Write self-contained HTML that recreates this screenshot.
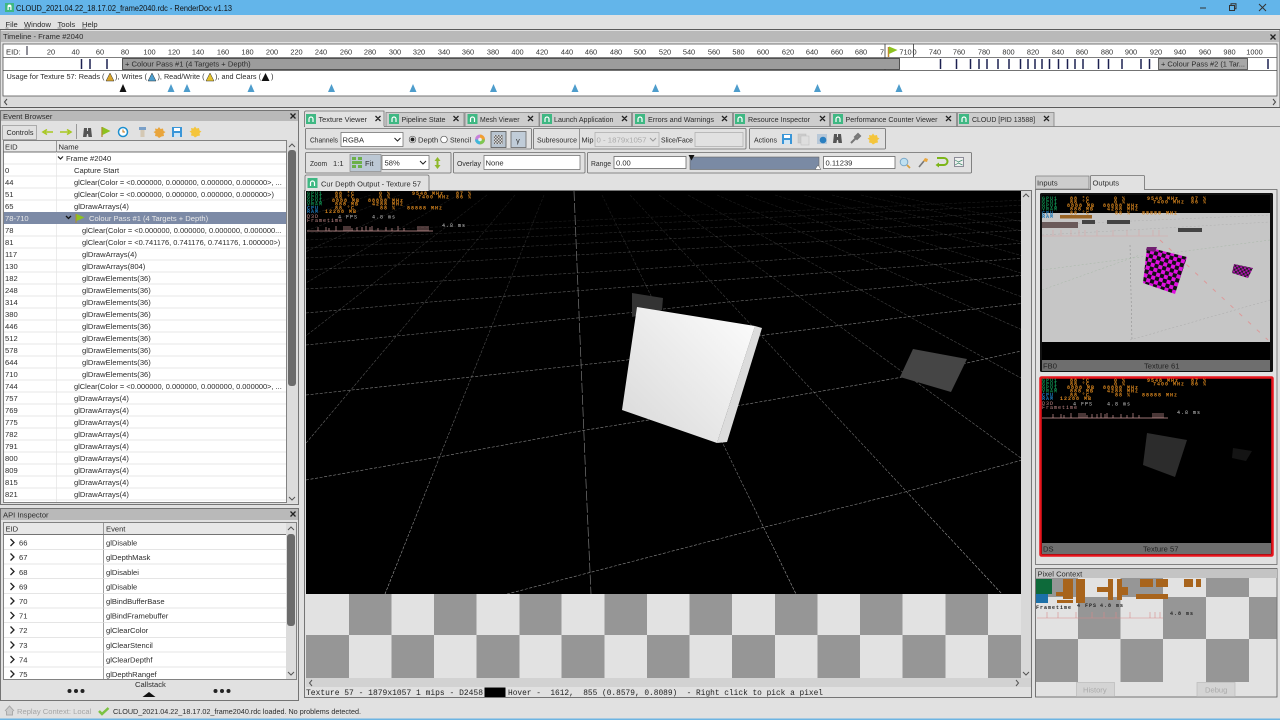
<!DOCTYPE html>
<html><head><meta charset="utf-8"><title>RenderDoc</title>
<style>
html,body{margin:0;padding:0;background:#e1e1e1;width:1280px;height:720px;overflow:hidden}
svg{display:block;position:absolute;left:0;top:0;filter:blur(.35px)}
text{font-family:"Liberation Sans",sans-serif;font-size:7.6px;fill:#2c2c2c;white-space:pre}
text.n{font-size:7.45px}
.m text,text.m{font-family:"Liberation Mono",monospace;font-size:8px;fill:#222}
.t text{text-anchor:middle;font-size:7.4px;fill:#333}
.o text{font-family:"Liberation Mono",monospace;font-size:5px;font-weight:bold;letter-spacing:1px;fill:#d8861e}
.o .g{fill:#0f8a4e}.o .b{fill:#1c78b8}.o .w{fill:#ccc;font-weight:normal}.o .p{fill:#c48a8a;font-weight:normal}
.c text{font-family:"Liberation Mono",monospace;font-size:5px;font-weight:bold;letter-spacing:1px;fill:#3a2208}
.c .w{fill:#222}
.x{stroke:#222;stroke-width:1.3;fill:none}
.tab{fill:#cdcdcd;stroke:#808080;stroke-width:.8}
.hz{stroke:#8a8a8a;stroke-width:.6;stroke-dasharray:3 1.6;fill:none}
.vt{stroke:url(#vg);stroke-width:.6;stroke-dasharray:3 1.4;fill:none}
</style></head><body>
<svg width="1280" height="720" viewBox="0 0 1280 720" xmlns="http://www.w3.org/2000/svg">
<defs>
<clipPath id="vp"><rect x="306" y="191" width="715" height="403"/></clipPath>
<linearGradient id="vg" gradientUnits="userSpaceOnUse" x1="0" y1="195" x2="0" y2="594"><stop offset="0" stop-color="#181818"/><stop offset=".4" stop-color="#505050"/><stop offset="1" stop-color="#a5a5a5"/></linearGradient>
<linearGradient id="cube" x1="0" y1="1" x2="1" y2="0"><stop offset="0" stop-color="#d8d8d8"/><stop offset="1" stop-color="#fdfdfd"/></linearGradient>
<pattern id="chk" width="8" height="8" patternUnits="userSpaceOnUse" patternTransform="rotate(16) translate(1143 247)"><rect width="8" height="8" fill="#e010e0"/><rect width="4" height="4" fill="#111"/><rect x="4" y="4" width="4" height="4" fill="#111"/></pattern>
<pattern id="chk2" width="4" height="4" patternUnits="userSpaceOnUse" patternTransform="rotate(14)"><rect width="4" height="4" fill="#b010b0"/><rect width="2" height="2" fill="#222"/><rect x="2" y="2" width="2" height="2" fill="#222"/></pattern>
<pattern id="mini" width="3" height="3" patternUnits="userSpaceOnUse"><rect width="3" height="3" fill="#dadada"/><rect width="1.5" height="1.5" fill="#666"/><rect x="1.5" y="1.5" width="1.5" height="1.5" fill="#666"/></pattern>
</defs>

<!-- title bar -->
<rect width="1280" height="15" fill="#63b5ea"/>
<rect x="5" y="3" width="9" height="9" fill="#3fb883"/><path d="M7.5 10V6.5a2 2 0 0 1 4 0V10h-1.2V7h-1.6v3z" fill="#fff"/>
<text x="16" y="11" style="font-size:8.6px;fill:#111" textLength="216" lengthAdjust="spacingAndGlyphs">CLOUD_2021.04.22_18.17.02_frame2040.rdc - RenderDoc v1.13</text>
<path d="M1200 8h6" stroke="#333" stroke-width="1"/>
<path d="M1229.5 5.5h5v5h-5zM1231 5.5V3.8h5v5h-1.5" fill="none" stroke="#333" stroke-width="1"/>
<path d="M1259 4l7 7M1266 4l-7 7" stroke="#333" stroke-width="1"/>

<!-- menu -->
<text x="5.5" y="27">File</text>
<text x="24" y="27">Window</text><text x="57.5" y="27">Tools</text><text x="82" y="27">Help</text>
<path d="M5.5 28h3M24 28h6M57.5 28h4M82 28h4" stroke="#333" stroke-width=".5"/>

<!-- timeline -->
<rect x="0" y="29.5" width="1280" height="78" fill="none" stroke="#5a5a5a" stroke-width="1"/>
<rect x="1" y="31" width="1278" height="11" fill="#b9b9b9"/>
<text x="3" y="39">Timeline - Frame #2040</text>
<path d="M1270.5 34.5l5 5M1275.5 34.5l-5 5" class="x"/>
<rect x="3" y="44" width="1274" height="52" fill="#fff" stroke="#555" stroke-width=".8"/>
<line x1="3" x2="1277" y1="57.5" y2="57.5" stroke="#555" stroke-width=".8"/>
<line x1="3" x2="1277" y1="70.5" y2="70.5" stroke="#444" stroke-width=".8"/>
<text x="6" y="54.5">EID:</text>
<line x1="27" x2="27" y1="46" y2="55" stroke="#223" stroke-width="1"/>
<g class="t">
<text x="51" y="54.5">20</text><text x="75.6" y="54.5">40</text><text x="100" y="54.5">60</text><text x="125" y="54.5">80</text><text x="149.5" y="54.5">100</text><text x="174" y="54.5">120</text><text x="198" y="54.5">140</text><text x="223" y="54.5">160</text><text x="247.5" y="54.5">180</text><text x="272" y="54.5">200</text><text x="296.5" y="54.5">220</text><text x="321" y="54.5">240</text><text x="346" y="54.5">260</text><text x="370" y="54.5">280</text><text x="395" y="54.5">300</text><text x="419" y="54.5">320</text><text x="444" y="54.5">340</text><text x="468" y="54.5">360</text><text x="493" y="54.5">380</text><text x="517.5" y="54.5">400</text><text x="542" y="54.5">420</text><text x="567" y="54.5">440</text><text x="591" y="54.5">460</text><text x="616" y="54.5">480</text><text x="640" y="54.5">500</text><text x="665" y="54.5">520</text><text x="689" y="54.5">540</text><text x="714" y="54.5">560</text><text x="738.5" y="54.5">580</text><text x="763" y="54.5">600</text><text x="788" y="54.5">620</text><text x="812" y="54.5">640</text><text x="837" y="54.5">660</text><text x="861" y="54.5">680</text><text x="882" y="54.5">7</text><text x="905.5" y="54.5">710</text><text x="914.5" y="54.5">0</text><text x="935" y="54.5">740</text><text x="959" y="54.5">760</text><text x="984" y="54.5">780</text><text x="1008.5" y="54.5">800</text><text x="1033" y="54.5">820</text><text x="1058" y="54.5">840</text><text x="1082" y="54.5">860</text><text x="1107" y="54.5">880</text><text x="1131" y="54.5">900</text><text x="1156" y="54.5">920</text><text x="1180" y="54.5">940</text><text x="1205" y="54.5">960</text><text x="1229.5" y="54.5">980</text><text x="1254.5" y="54.5">1000</text>
</g>
<path d="M885 44V70M913.5 44V57" stroke="#333" stroke-width=".8"/>
<path d="M888.5 57V47" stroke="#c08a30" stroke-width="1.5"/><path d="M889 46.5l8.5 3.5-8.5 4z" fill="#8dc21f"/>
<rect x="122.5" y="58.5" width="777" height="11" fill="#9c9c9c" stroke="#333" stroke-width=".8"/>
<text x="125" y="66.5">+ Colour Pass #1 (4 Targets + Depth)</text>
<rect x="1158.5" y="58.5" width="89" height="11" fill="#a8a8a8" stroke="#444" stroke-width=".8"/>
<text x="1161" y="66.5" textLength="84" lengthAdjust="spacingAndGlyphs">+ Colour Pass #2 (1 Tar...</text>
<path d="M81.5 59v10M90 59v10M107 59v10M940.5 59v10M956.5 59v10M970.5 59v10M979 59v10M987 59v10M998 59v10M1009 59v10M1020.5 59v10M1028 59v10M1035 59v10M1042 59v10M1049.5 59v10M1058.5 59v10M1067.5 59v10M1075 59v10M1083 59v10M1098.5 59v10M1108.5 59v10M1122 59v10M1141 59v10M1149.5 59v10M1268 59v10" stroke="#1c2050" stroke-width="1.5"/>
<text x="6.5" y="79" textLength="98" lengthAdjust="spacingAndGlyphs">Usage for Texture 57: Reads (</text>
<path d="M110 73l4 8h-8z" fill="#d9a52a" stroke="#333" stroke-width=".5"/>
<text x="115" y="79" textLength="32" lengthAdjust="spacingAndGlyphs">), Writes (</text>
<path d="M152 73l4 8h-8z" fill="#4c9fd0" stroke="#333" stroke-width=".5"/>
<text x="157.5" y="79" textLength="47" lengthAdjust="spacingAndGlyphs">), Read/Write (</text>
<path d="M210 73l4 8h-8z" fill="#e4c22a" stroke="#333" stroke-width=".5"/>
<text x="215" y="79" textLength="46" lengthAdjust="spacingAndGlyphs">), and Clears (</text>
<path d="M265.5 73l4 8h-8z" fill="#111"/>
<text x="271" y="79">)</text>
<path d="M123 84l3.5 8h-7z" fill="#111"/>
<path d="M171 84l3.5 8h-7zM187 84l3.5 8h-7zM251 84l3.5 8h-7zM331.5 84l3.5 8h-7zM413 84l3.5 8h-7zM493.5 84l3.5 8h-7zM575 84l3.5 8h-7zM655.5 84l3.5 8h-7zM737 84l3.5 8h-7zM817.5 84l3.5 8h-7zM899 84l3.5 8h-7z" fill="#4e9dcc"/>
<rect x="3" y="96.5" width="1274" height="10" fill="#dadada"/>
<path d="M7 99l-2.5 3 2.5 3M1273 99l2.5 3-2.5 3" fill="none" stroke="#444" stroke-width="1"/>

<!-- event browser -->
<rect x=".5" y="110.5" width="298" height="394" fill="#e1e1e1" stroke="#5a5a5a" stroke-width=".8"/>
<rect x="1" y="111" width="297" height="10" fill="#b9b9b9"/>
<text x="3" y="119">Event Browser</text>
<path d="M290.5 113.5l5 5M295.5 113.5l-5 5" class="x"/>
<rect x="2.5" y="125.5" width="34" height="14" fill="#e1e1e1" stroke="#888" stroke-width=".6"/>
<text x="6.5" y="135" textLength="27" lengthAdjust="spacingAndGlyphs">Controls</text>
<path d="M45 132h8M47 129.5L43 132l4 2.500" stroke="#a7c71f" stroke-width="1.600" fill="none"/>
<path d="M60 132h9M67 129.5l4 2.500-4 2.500" stroke="#a7c71f" stroke-width="1.600" fill="none"/>
<line x1="76.5" x2="76.5" y1="124" y2="139" stroke="#999"/>
<path d="M84 128h3v3h1v-3h3l1 9h-3.5l-.5-3h-1l-.5 3H83z" fill="#555"/>
<path d="M102 127v10" stroke="#b08a30" stroke-width="1.3"/><path d="M102.5 127l8 4-8 4z" fill="#8dc21f"/>
<circle cx="123" cy="132" r="4.5" fill="#fff" stroke="#1c8fcf" stroke-width="1.5"/><path d="M123 129.5V132h2" stroke="#c97a1a" stroke-width="1" fill="none"/>
<rect x="139" y="127" width="7" height="3" fill="#7aa0c8"/><rect x="140.5" y="130" width="4" height="7" fill="#d4c8b4"/>
<path d="M159 127l1.5 2 2.5-.5.5 2.5 2 1-2 1.5.5 2.5-2.5.5L159 138l-1.5-1.5-2.5-.5.5-2.5-2-1.5 2-1-.5-2.5 2.5.5z" fill="#e9a53c"/>
<rect x="172" y="127" width="10" height="10" fill="#3a96d8"/><rect x="174" y="128" width="6" height="3" fill="#fff"/><rect x="174" y="133" width="6" height="4" fill="#cfe6f6"/>
<path d="M195 126.5l1.5 2 2.5-.5.5 2.500 2 1-2 1.500.5 2.500-2.500.5-2.500 1.500-1.500-1.500-2.500-.5.5-2.500-2-1.500 2-1-.5-2.500 2.500.5z" fill="#f4c53c"/>
<rect x="3.5" y="140.5" width="283" height="362" fill="#fff" stroke="#555" stroke-width=".7"/>
<rect x="4" y="141" width="282" height="11" fill="#e8e8e8"/>
<line x1="3.5" x2="286" y1="152" y2="152" stroke="#444" stroke-width=".8"/>
<line x1="56.5" x2="56.5" y1="141" y2="152" stroke="#777" stroke-width=".7"/>
<line x1="56.5" x2="56.5" y1="152" y2="502" stroke="#e4e4e4" stroke-width=".7"/>
<text x="5" y="149.5">EID</text><text x="58.5" y="149.5">Name</text>
<g stroke="#e0e0e0" stroke-width=".7"><path d="M4 164h282M4 176h282M4 188h282M4 200h282M4 236h282M4 248h282M4 260h282M4 272h282M4 284h282M4 296h282M4 308h282M4 320h282M4 332h282M4 344h282M4 356h282M4 368h282M4 380h282M4 392h282M4 404h282M4 416h282M4 428h282M4 440h282M4 452h282M4 464h282M4 476h282M4 488h282M4 500h282"/></g>
<rect x="4" y="212" width="282" height="12" fill="#7c8aa6"/>
<path d="M58 156.5l2.5 2.5 2.5-2.5" fill="none" stroke="#222" stroke-width="1.2"/>
<text x="66" y="161">Frame #2040</text>
<text x="5" y="173">0</text><text x="74" y="173">Capture Start</text>
<text x="5" y="185">44</text><text class="n" x="74" y="185">glClear(Color = &lt;0.000000, 0.000000, 0.000000, 0.000000&gt;, ...</text>
<text x="5" y="197">51</text><text class="n" x="74" y="197">glClear(Color = &lt;0.000000, 0.000000, 0.000000, 0.000000&gt;)</text>
<text x="5" y="209">65</text><text x="74" y="209">glDrawArrays(4)</text>
<text x="5" y="221" style="fill:#e8e8e8">78-710</text>
<path d="M66 216l2.5 2.5 2.5-2.5" fill="none" stroke="#111" stroke-width="1.3"/>
<path d="M76 214v9" stroke="#b08a30" stroke-width="1"/><path d="M76.5 214l8 3.5-8 3.5z" fill="#8dc21f"/>
<text x="89" y="221" style="fill:#e8e8e8">Colour Pass #1 (4 Targets + Depth)</text>
<text x="5" y="233">78</text><text class="n" x="82" y="233">glClear(Color = &lt;0.000000, 0.000000, 0.000000, 0.000000...</text>
<text x="5" y="245">81</text><text class="n" x="82" y="245">glClear(Color = &lt;0.741176, 0.741176, 0.741176, 1.000000&gt;)</text>
<text x="5" y="257">117</text><text x="82" y="257">glDrawArrays(4)</text>
<text x="5" y="269">130</text><text x="82" y="269">glDrawArrays(804)</text>
<text x="5" y="281">182</text><text x="82" y="281">glDrawElements(36)</text>
<text x="5" y="293">248</text><text x="82" y="293">glDrawElements(36)</text>
<text x="5" y="305">314</text><text x="82" y="305">glDrawElements(36)</text>
<text x="5" y="317">380</text><text x="82" y="317">glDrawElements(36)</text>
<text x="5" y="329">446</text><text x="82" y="329">glDrawElements(36)</text>
<text x="5" y="341">512</text><text x="82" y="341">glDrawElements(36)</text>
<text x="5" y="353">578</text><text x="82" y="353">glDrawElements(36)</text>
<text x="5" y="365">644</text><text x="82" y="365">glDrawElements(36)</text>
<text x="5" y="377">710</text><text x="82" y="377">glDrawElements(36)</text>
<text x="5" y="389">744</text><text class="n" x="74" y="389">glClear(Color = &lt;0.000000, 0.000000, 0.000000, 0.000000&gt;, ...</text>
<text x="5" y="401">757</text><text x="74" y="401">glDrawArrays(4)</text>
<text x="5" y="413">769</text><text x="74" y="413">glDrawArrays(4)</text>
<text x="5" y="425">775</text><text x="74" y="425">glDrawArrays(4)</text>
<text x="5" y="437">782</text><text x="74" y="437">glDrawArrays(4)</text>
<text x="5" y="449">791</text><text x="74" y="449">glDrawArrays(4)</text>
<text x="5" y="461">800</text><text x="74" y="461">glDrawArrays(4)</text>
<text x="5" y="473">809</text><text x="74" y="473">glDrawArrays(4)</text>
<text x="5" y="485">815</text><text x="74" y="485">glDrawArrays(4)</text>
<text x="5" y="497">821</text><text x="74" y="497">glDrawArrays(4)</text>
<rect x="287" y="141" width="11" height="362" fill="#dcdcdc"/>
<rect x="288" y="150" width="8" height="236" rx="3" fill="#6b6b6b"/>
<path d="M289 147l3-3 3 3M289 497l3 3 3-3" fill="none" stroke="#555" stroke-width="1"/>

<!-- API inspector -->
<rect x=".5" y="508.5" width="298" height="192" fill="#e1e1e1" stroke="#5a5a5a" stroke-width=".8"/>
<rect x="1" y="509" width="297" height="11" fill="#b9b9b9"/>
<text x="3" y="517.5">API Inspector</text>
<path d="M290.5 511.5l5 5M295.5 511.5l-5 5" class="x"/>
<rect x="3.5" y="522.5" width="293" height="157" fill="#fff" stroke="#555" stroke-width=".7"/>
<rect x="4" y="523" width="282" height="11" fill="#e8e8e8"/>
<line x1="4" x2="286" y1="534.5" y2="534.5" stroke="#444" stroke-width=".8"/>
<line x1="103.5" x2="103.5" y1="523" y2="679" stroke="#777" stroke-width=".7"/>
<text x="5.5" y="531.5">EID</text><text x="106" y="531.5">Event</text>
<g stroke="#ddd" stroke-width=".7"><path d="M4 549.5h282M4 564h282M4 578.5h282M4 593.5h282M4 608h282M4 622.5h282M4 637.5h282M4 652h282M4 667h282"/></g>
<path d="M10.5 539l3.5 3.5-3.5 3.5M10.5 553.5l3.5 3.5-3.5 3.5M10.5 568l3.5 3.5-3.5 3.5M10.5 583l3.5 3.5-3.5 3.5M10.5 597.5l3.5 3.5-3.5 3.5M10.5 612l3.5 3.5-3.5 3.5M10.5 626.5l3.5 3.5-3.5 3.5M10.5 641.5l3.5 3.5-3.5 3.5M10.5 656l3.5 3.5-3.5 3.5M10.5 670.5l3.5 3.5-3.5 3.5" fill="none" stroke="#222" stroke-width="1.3"/>
<text x="19" y="545.5">66</text><text x="106" y="545.5">glDisable</text>
<text x="19" y="560">67</text><text x="106" y="560">glDepthMask</text>
<text x="19" y="575">68</text><text x="106" y="575">glDisablei</text>
<text x="19" y="589.5">69</text><text x="106" y="589.5">glDisable</text>
<text x="19" y="604">70</text><text x="106" y="604">glBindBufferBase</text>
<text x="19" y="618.5">71</text><text x="106" y="618.5">glBindFramebuffer</text>
<text x="19" y="633">72</text><text x="106" y="633">glClearColor</text>
<text x="19" y="648">73</text><text x="106" y="648">glClearStencil</text>
<text x="19" y="662.5">74</text><text x="106" y="662.5">glClearDepthf</text>
<text x="19" y="677">75</text><text x="106" y="677">glDepthRangef</text>
<rect x="286" y="523" width="10" height="156" fill="#dcdcdc"/>
<rect x="287" y="534" width="8" height="92" rx="3" fill="#6b6b6b"/>
<path d="M288 530l3-3 3 3M288 672l3 3 3-3" fill="none" stroke="#555" stroke-width="1"/>
<text x="135" y="687">Callstack</text>
<circle cx="69.5" cy="691" r="2" fill="#222"/><circle cx="76" cy="691" r="2" fill="#222"/><circle cx="82.5" cy="691" r="2" fill="#222"/>
<circle cx="215.5" cy="691" r="2" fill="#222"/><circle cx="222" cy="691" r="2" fill="#222"/><circle cx="228.5" cy="691" r="2" fill="#222"/>
<path d="M142.5 697l6.5-5 6.5 5z" fill="#111"/>

<!-- status bar -->
<path d="M5 711l4.5-5 4.5 5M6.5 711v4h6v-4" fill="#ccc" stroke="#aaa" stroke-width="1"/>
<text x="17" y="714" style="fill:#a5a5a5">Replay Context: Local</text>
<path d="M99 711l3 3 6.5-6" fill="none" stroke="#7cc242" stroke-width="2.5"/>
<text x="113" y="714" textLength="248" lengthAdjust="spacingAndGlyphs">CLOUD_2021.04.22_18.17.02_frame2040.rdc loaded. No problems detected.</text>
<rect y="718.5" width="1280" height="1.5" fill="#6cb4e2"/>

<!-- main tabs -->
<line x1="304" x2="1280" y1="126.5" y2="126.5" stroke="#707070" stroke-width=".8"/>
<path class="tab" d="M386 126.500V112.500h78v14zM465 126.500V112.500h74v14z"/>
<path class="tab" d="M539.500 126.500V112.500h92v14zM632.500 126.500V112.500h100v14zM733.500 126.500V112.500h96v14zM830.500 126.500V112.500h126v14zM957.500 126.500V112.500h96.500v14z"/>
<path d="M304.500 127V112.500a1.500 1.500 0 0 1 1.500-1.500h78v16" fill="#e1e1e1" stroke="#707070" stroke-width=".8"/>
<path d="M305 127h79" stroke="#e1e1e1" stroke-width="1.500"/>
<g fill="#3fb883"><rect x="306" y="114" width="10" height="10"/><rect x="389" y="114" width="10" height="10"/><rect x="467.500" y="114" width="10" height="10"/><rect x="542" y="114" width="10" height="10"/><rect x="635" y="114" width="10" height="10"/><rect x="735" y="114" width="10" height="10"/><rect x="833" y="114" width="10" height="10"/><rect x="959" y="114" width="10" height="10"/></g>
<g fill="none" stroke="#fff" stroke-width="1.2"><path d="M309 122v-3a2 2 0 0 1 4 0v3M392 122v-3a2 2 0 0 1 4 0v3M470.500 122v-3a2 2 0 0 1 4 0v3M545 122v-3a2 2 0 0 1 4 0v3M638 122v-3a2 2 0 0 1 4 0v3M738 122v-3a2 2 0 0 1 4 0v3M836 122v-3a2 2 0 0 1 4 0v3M962 122v-3a2 2 0 0 1 4 0v3"/></g>
<text x="318.500" y="122" textLength="48.500" lengthAdjust="spacingAndGlyphs">Texture Viewer</text>
<text x="401.500" y="122" textLength="44" lengthAdjust="spacingAndGlyphs">Pipeline State</text>
<text x="480" y="122" textLength="39.500" lengthAdjust="spacingAndGlyphs">Mesh Viewer</text>
<text x="554" y="122" textLength="59.500" lengthAdjust="spacingAndGlyphs">Launch Application</text>
<text x="648" y="122" textLength="66" lengthAdjust="spacingAndGlyphs">Errors and Warnings</text>
<text x="748" y="122" textLength="62" lengthAdjust="spacingAndGlyphs">Resource Inspector</text>
<text x="845.500" y="122" textLength="92" lengthAdjust="spacingAndGlyphs">Performance Counter Viewer</text>
<text x="972" y="122" textLength="63" lengthAdjust="spacingAndGlyphs">CLOUD [PID 13588]</text>
<path class="x" d="M375.500 116l5 5M380.500 116l-5 5M453.500 116l5 5M458.500 116l-5 5M528 116l5 5M533 116l-5 5M622 116l5 5M627 116l-5 5M722 116l5 5M727 116l-5 5M820 116l5 5M825 116l-5 5M946 116l5 5M951 116l-5 5M1044 116l5 5M1049 116l-5 5"/>

<!-- toolbar rows -->
<g fill="#e1e1e1" stroke="#6a6a6a" stroke-width=".8">
<rect x="305.500" y="128.500" width="226" height="20.500" rx="1"/>
<rect x="533.500" y="128.500" width="212.500" height="20.500" rx="1"/>
<rect x="749.500" y="128.500" width="136" height="20.500" rx="1"/>
<rect x="305.500" y="152.500" width="145.500" height="20.500" rx="1"/>
<rect x="453.500" y="152.500" width="131.500" height="20.500" rx="1"/>
<rect x="587.500" y="152.500" width="384" height="20.500" rx="1"/>
</g>
<text x="310" y="142.500" textLength="28" lengthAdjust="spacingAndGlyphs">Channels</text>
<rect x="341" y="132.500" width="62" height="14" fill="#fff" stroke="#666" stroke-width=".7"/><text x="342.500" y="142.500">RGBA</text>
<path d="M394.500 138l3 3 3-3" fill="none" stroke="#222" stroke-width="1"/>
<circle cx="412.500" cy="139.500" r="3.300" fill="#fff" stroke="#555" stroke-width=".7"/><circle cx="412.500" cy="139.500" r="2" fill="#222"/>
<text x="418" y="142.500">Depth</text>
<circle cx="444" cy="139.500" r="3.300" fill="#fff" stroke="#555" stroke-width=".7"/>
<text x="450" y="142.500" textLength="21" lengthAdjust="spacingAndGlyphs">Stencil</text>
<circle cx="480" cy="139.500" r="5" fill="#c880d8"/><path d="M480 139.500V134.500a5 5 0 0 1 5 5z" fill="#f2a030"/><path d="M480 139.500h5a5 5 0 0 1-5 5z" fill="#7ec850"/><path d="M480 139.500v5a5 5 0 0 1-5-5z" fill="#40b8d8"/><circle cx="480" cy="139.500" r="1.800" fill="#eee"/>
<rect x="491" y="131.500" width="15" height="16" fill="#b8c4d0" stroke="#555" stroke-width=".8"/><rect x="494" y="135" width="9" height="9" fill="url(#mini)"/>
<rect x="511" y="131.500" width="15" height="16" fill="#c0ccd8" stroke="#666" stroke-width=".8"/><text x="516" y="143">γ</text>
<text x="537" y="142.500" textLength="40" lengthAdjust="spacingAndGlyphs">Subresource</text><line x1="579.500" x2="579.500" y1="129" y2="149" stroke="#777" stroke-width=".7"/>
<text x="581.500" y="142.500" textLength="12" lengthAdjust="spacingAndGlyphs">Mip</text>
<rect x="595" y="132.500" width="64" height="14" fill="#e1e1e1" stroke="#aaa" stroke-width=".7"/><text x="596.500" y="142.500" style="fill:#aaa" textLength="50" lengthAdjust="spacingAndGlyphs">0 - 1879x1057</text>
<path d="M650 138l3 3 3-3M734 138l3 3 3-3" fill="none" stroke="#999" stroke-width="1"/>
<text x="661" y="142.500" textLength="32" lengthAdjust="spacingAndGlyphs">Slice/Face</text>
<rect x="695" y="132.500" width="48" height="14" fill="#e1e1e1" stroke="#aaa" stroke-width=".7"/>
<text x="754" y="142.500" textLength="23" lengthAdjust="spacingAndGlyphs">Actions</text>
<rect x="782" y="134" width="10" height="10" fill="#3a96d8"/><rect x="784" y="135" width="6" height="3" fill="#fff"/><rect x="784" y="140" width="6" height="4" fill="#cfe6f6"/>
<rect x="798" y="134" width="8" height="9" fill="#ccc" stroke="#bbb" stroke-width=".5"/><rect x="801" y="136" width="8" height="9" fill="#dedede" stroke="#bbb" stroke-width=".5"/>
<rect x="817" y="134" width="10" height="10" fill="#b8c8d8"/><circle cx="823" cy="140" r="3.300" fill="#2a7fc0"/>
<path d="M834 134h3v3h1v-3h3l1 9h-3.500l-.5-3h-1l-.5 3H833z" fill="#555"/>
<path d="M851 143l5-5M855 137l3-3 2 2-3 3z" stroke="#777" stroke-width="2" fill="#888"/>
<path d="M873 133.500l1.500 2 2.500-.5.5 2.500 2 1-2 1.500.5 2.500-2.500.5-2.500 1.500-1.500-1.500-2.500-.5.5-2.500-2-1.500 2-1-.5-2.500 2.500.5z" fill="#f4c53c"/>

<text x="310" y="166" textLength="17" lengthAdjust="spacingAndGlyphs">Zoom</text><text x="333" y="166">1:1</text>
<rect x="350" y="154.500" width="31" height="17" fill="#bcc8d4" stroke="#888" stroke-width=".7"/>
<path d="M352 157h4v3h-4zM358 157h4v3h-4zM352 165h4v3h-4zM358 165h4v3h-4zM352 161h10v3H352z" fill="#6cb04a"/>
<text x="365" y="166">Fit</text>
<rect x="382" y="155.500" width="47" height="14" fill="#fff" stroke="#666" stroke-width=".7"/><text x="384.500" y="165.500">58%</text>
<path d="M420 161l3 3 3-3M573 161l3 3 3-3" fill="none" stroke="#222" stroke-width="1"/>
<path d="M437.500 157l3 4h-2v4h2l-3 4-3-4h2v-4h-2z" fill="#8fb82a"/>
<text x="457" y="166" textLength="24" lengthAdjust="spacingAndGlyphs">Overlay</text>
<rect x="484" y="155.500" width="96" height="14" fill="#fff" stroke="#666" stroke-width=".7"/><text x="485.500" y="165.500">None</text>
<text x="591" y="166" textLength="20" lengthAdjust="spacingAndGlyphs">Range</text>
<rect x="614" y="156.500" width="72" height="12" fill="#fff" stroke="#555" stroke-width=".7"/><text x="616" y="165.500">0.00</text>
<rect x="690" y="157" width="129" height="12.500" fill="#7a8aa4" stroke="#666" stroke-width=".6"/>
<path d="M688.500 155h6l-3 5.500z" fill="#111"/>
<path d="M818 165l3 4.500h-6z" fill="#fff" stroke="#555" stroke-width=".5"/>
<rect x="823.500" y="156.500" width="71.500" height="12" fill="#fff" stroke="#555" stroke-width=".7"/><text x="825.500" y="165.500">0.11239</text>
<circle cx="904" cy="162" r="3.800" fill="#bfe0f0" stroke="#7aa8c8" stroke-width="1"/><path d="M907 165l3 3" stroke="#d8a040" stroke-width="1.800"/>
<path d="M919 167l5-6" stroke="#777" stroke-width="1.600"/><path d="M923 161l2-3 3 1-1 3z" fill="#e9a53c"/>
<path d="M937 158h7a3.500 3.500 0 0 1 0 7h-7" fill="none" stroke="#7cb518" stroke-width="2"/><path d="M939 162.500l-3.500 2.500 3.500 2.500z" fill="#7cb518"/>
<rect x="954.500" y="157.500" width="9" height="9" fill="#f0f0f0" stroke="#667" stroke-width=".7"/><path d="M955 160l3.500 2 4-2M955 165l3.500-2 4 2" stroke="#3a8a6a" stroke-width=".7" fill="none"/>

<!-- viewport frame -->
<rect x="304.500" y="190.500" width="727" height="507" fill="#e1e1e1" stroke="#5a5a5a" stroke-width=".8"/>
<path d="M305 191v-14.500a1.500 1.500 0 0 1 1.500-1.500h121a1.500 1.500 0 0 1 1.500 1.500V191" fill="#e1e1e1" stroke="#707070" stroke-width=".8"/>
<rect x="307.500" y="178" width="10" height="10" fill="#3fb883"/><path d="M310.500 186v-3a2 2 0 0 1 4 0v3" fill="none" stroke="#fff" stroke-width="1.200"/>
<text x="321" y="186.500" textLength="100" lengthAdjust="spacingAndGlyphs">Cur Depth Output - Texture 57</text>

<rect x="306" y="191" width="715" height="403" fill="#000"/>
<g clip-path="url(#vp)">
<path class="vt" d="M602 195L796 594M630 195L1002 594M659 195L1208 594M688 195L1414 594M717 195L1620 594M746 195L1826 594M775 195L2032 594M804 195L2238 594M832 195L2444 594M861 195L2650 594M890 195L2856 594M544 195L385 594M515 195L179 594M487 195L-26 594M458 195L-232 594M429 195L-438 594M400 195L-644 594M371 195L-850 594M342 195L-1056 594"/>
<path d="M574 191L585 460L591 594" stroke="#777" stroke-width=".7" stroke-dasharray="10 2" fill="none"/>
<g class="hz">
<path d="M507 594L765 527L905 492L1026 459"/>
<path d="M306 480L444 456L586 430L742 405L903 377L1026 350"/>
<path d="M306 395L627 360L765 335L898 318L1026 303" opacity=".95"/>
<path d="M306 345L627 313L728 302L1026 275" opacity=".8"/>
<path d="M306 313L430 302L627 287L1026 258" opacity=".7"/>
<path d="M306 289L627 270L1026 243" opacity=".55"/>
<path d="M306 270L1026 230" opacity=".45"/>
<path d="M306 258L1026 220" opacity=".38"/>
<path d="M306 248L1026 212" opacity=".3"/>
<path d="M306 240L1026 205" opacity=".25"/>
<path d="M306 233L1026 200" opacity=".2"/>
</g>
<path d="M632 293L663 298L662 310L632 317z" fill="#333"/>
<path d="M913 349L967 359L951 392L900 377z" fill="#454545"/>
<path d="M755 326L762 328L727 442L717 443z" fill="#dcdcdc"/>
<path d="M637 307L755 326L717 443L622 410z" fill="url(#cube)"/>
</g>

<!-- osd main -->
<g class="o">
<text class="g" x="307" y="195">GPU1</text><text class="g" x="307" y="198.500">GPU1</text><text class="g" x="307" y="202">GPU1</text><text class="g" x="307" y="205.500">VRAM</text><text class="b" x="307" y="209.500">CPU</text><text class="b" x="307" y="213">RAM</text>
<text x="335" y="195">88 °C</text><text x="379" y="195">0 %</text><text x="412" y="195">9548 MHz</text><text x="456" y="195">87 %</text>
<text x="335" y="198.500">88 °C</text><text x="379" y="198.500">0 %</text><text x="418" y="198.500">7400 MHz</text><text x="456" y="198.500">86 %</text>
<text x="332" y="202">8888 MB</text><text x="368" y="202">88888 MHz</text>
<text x="335" y="205.500">888 MB</text><text x="372" y="205.500">4288 MHz</text>
<text x="335" y="209.500">88 °C</text><text x="380" y="209.500">88 %</text><text x="407" y="209.500">88888 MHz</text>
<text x="325" y="213">12288 MB</text>
<text class="p" x="307" y="218">D3D</text><text class="w" x="338" y="218.500">4 FPS</text><text class="w" x="372" y="218.500">4.8 ms</text>
<text class="p" x="307" y="222">Frametime</text>
<text class="w" x="442" y="227">4.8 ms</text>
<path d="M307 231H318V227V231H326V227V231H329V228V231H336V226V231H344V226V231H346V226V231H348V226V231H350V226V231H352V228V231H357V227V231H362V227V231H366V226V231H370V227V231H372V226V231H378V228V231H386V227V231H392V228V231H398V226V231H404V228V231H418V226V231H420V226V231H422V226V231H424V226V231H426V226V231H428V226V231H433" fill="none" stroke="#d09a9a" stroke-width=".7"/>
</g>

<!-- checker main -->
<rect x="306" y="594" width="715" height="84" fill="#e2e2e2"/>
<path fill="#969696" d="M349 594h42.500v41H349zM434 594h42.500v41H434zM519.500 594h42v41h-42zM604.500 594h42.500v41H604.500zM689.500 594h42.500v41H689.500zM775 594h42.500v41H775zM860 594h42.500v41H860zM945.500 594h42.500v41H945.500z"/>
<path fill="#969696" d="M306 635h43v43h-43zM391.500 635h42.500v43H391.500zM476.500 635h43v43h-43zM561.500 635h43v43h-43zM647 635h42.500v43H647zM732 635h43v43h-43zM817.500 635h42.500v43H817.500zM902.500 635h43v43h-43zM988 635h33v43h-33z"/>
<rect x="1021" y="191" width="10" height="487" fill="#d8d8d8"/>
<path d="M1023 197l3-3 3 3M1023 672l3 3 3-3" fill="none" stroke="#555" stroke-width="1"/>
<rect x="306" y="678" width="725" height="9" fill="#d2d2d2"/>
<path d="M312 680l-2.500 3 2.500 3M1016 680l2.500 3-2.500 3" fill="none" stroke="#555" stroke-width="1"/>
<text class="m" x="306" y="695" textLength="177" lengthAdjust="spacingAndGlyphs">Texture 57 - 1879x1057 1 mips - D2458</text>
<rect x="484.500" y="687.500" width="21" height="9.500" fill="#000"/>
<text class="m" x="508" y="695" textLength="315" lengthAdjust="spacingAndGlyphs">Hover -  1612,  855 (0.8579, 0.8089)  - Right click to pick a pixel</text>

<!-- right tabs -->
<path class="tab" d="M1035.500 189V177a1 1 0 0 1 1-1h52.500v13z"/>
<path d="M1090.500 189V176.500a1 1 0 0 1 1-1h52a1 1 0 0 1 1 1V189" fill="#e1e1e1" stroke="#707070" stroke-width=".8"/>
<text x="1037" y="185.500">Inputs</text><text x="1092.500" y="185.500">Outputs</text>
<rect x="1035.500" y="189.500" width="241.500" height="375" fill="#e1e1e1" stroke="#6a6a6a" stroke-width=".8"/>
<path d="M1091 189.500h53" stroke="#e1e1e1" stroke-width="1.500"/>

<!-- thumb 1 -->
<rect x="1040" y="193" width="233" height="179" rx="1.500" fill="#111"/>
<rect x="1042" y="195" width="228" height="165" fill="#000"/>
<rect x="1042" y="213" width="228" height="129" fill="#c6c6c6"/>
<g stroke-width=".5" fill="none">
<path d="M1130 245L1132 340" stroke="#888" stroke-dasharray="2 2"/>
<path d="M1042 270L1270 240M1042 290L1140 255" stroke="#a8b8a8" stroke-dasharray="2 2"/>
<path d="M1160 240L1268 340" stroke="#d99" stroke-width="1" stroke-dasharray="4 8"/>
<path d="M1130 340L1270 300" stroke="#aaa" stroke-dasharray="2 2"/>
<path d="M1042 225L1270 215M1042 235L1270 222" stroke="#b0b0b0" stroke-dasharray="2 2"/>
</g>
<path d="M1147 247L1187 257L1175 294L1143 283z" fill="url(#chk)"/>
<path d="M1147 247L1157 247L1155 252L1146 250z" fill="#702070"/>
<path d="M1234 264L1253 268L1248 278L1232 273z" fill="url(#chk2)"/>
<rect x="1042" y="360" width="228" height="11" fill="#6e6e6e"/>
<text x="1043" y="368.500" style="fill:#222">FB0</text><text x="1144" y="368.500" style="fill:#222">Texture 61</text>
<g class="o" transform="translate(735 5)">
<text class="g" x="307" y="195">GPU1</text><text class="g" x="307" y="198.500">GPU1</text><text class="g" x="307" y="202">GPU1</text><text class="g" x="307" y="205.500">VRAM</text><text class="b" x="307" y="209.500">CPU</text><text class="b" x="307" y="213">RAM</text>
<text x="335" y="195">88 °C</text><text x="379" y="195">0 %</text><text x="412" y="195">9548 MHz</text><text x="456" y="195">87 %</text>
<text x="335" y="198.500">88 °C</text><text x="379" y="198.500">0 %</text><text x="418" y="198.500">7400 MHz</text><text x="456" y="198.500">86 %</text>
<text x="332" y="202">8888 MB</text><text x="368" y="202">88888 MHz</text>
<text x="335" y="205.500">888 MB</text><text x="372" y="205.500">4288 MHz</text>
<text x="335" y="209.500">88 °C</text><text x="380" y="209.500">88 %</text><text x="407" y="209.500">88888 MHz</text>
<rect x="325" y="210" width="32" height="3.500" fill="#9a6424"/>
<rect x="307" y="217" width="36" height="6" fill="#6a5a5a"/><rect x="347" y="215" width="13" height="4" fill="#444"/><rect x="372" y="215" width="23" height="4" fill="#444"/><rect x="443" y="223" width="24" height="4" fill="#444"/>
<path d="M307 231H318V225V231H326V225V231H336V225V231H344V225V231H350V225V231H362V225V231H378V225V231H392V225V231H404V225V231H418V225V231H424V225V231H433" fill="none" stroke="#d8a8a8" stroke-width=".6"/>
</g>

<!-- thumb 2 -->
<rect x="1040.500" y="377.500" width="232" height="178" rx="1" fill="#000" stroke="#e8141c" stroke-width="2.500"/>
<path d="M1147 433L1187 440L1175 477L1143 465z" fill="#2c2c2c"/>
<path d="M1233 448L1252 451L1246 461L1232 458z" fill="#141414"/>
<rect x="1042" y="543" width="229" height="11" fill="#6e6e6e"/>
<text x="1043" y="551.500" style="fill:#222">DS</text><text x="1143" y="551.500" style="fill:#222">Texture 57</text>
<g class="o" transform="translate(735 187)">
<text class="g" x="307" y="195">GPU1</text><text class="g" x="307" y="198.500">GPU1</text><text class="g" x="307" y="202">GPU1</text><text class="g" x="307" y="205.500">VRAM</text><text class="b" x="307" y="209.500">CPU</text><text class="b" x="307" y="213">RAM</text>
<text x="335" y="195">88 °C</text><text x="379" y="195">0 %</text><text x="412" y="195">9548 MHz</text><text x="456" y="195">87 %</text>
<text x="335" y="198.500">88 °C</text><text x="379" y="198.500">0 %</text><text x="418" y="198.500">7400 MHz</text><text x="456" y="198.500">86 %</text>
<text x="332" y="202">8888 MB</text><text x="368" y="202">88888 MHz</text>
<text x="335" y="205.500">888 MB</text><text x="372" y="205.500">4288 MHz</text>
<text x="335" y="209.500">88 °C</text><text x="380" y="209.500">88 %</text><text x="407" y="209.500">88888 MHz</text>
<text x="325" y="213">12288 MB</text>
<text class="p" x="307" y="218">D3D</text><text class="w" x="338" y="218.500">4 FPS</text><text class="w" x="372" y="218.500">4.8 ms</text>
<text class="p" x="307" y="222">Frametime</text>
<text class="w" x="442" y="227">4.8 ms</text>
<path d="M307 231H318V227V231H326V227V231H329V228V231H336V226V231H344V226V231H346V226V231H348V226V231H350V226V231H352V228V231H357V227V231H362V227V231H366V226V231H370V227V231H372V226V231H378V228V231H386V227V231H392V228V231H398V226V231H404V228V231H418V226V231H420V226V231H422V226V231H424V226V231H426V226V231H428V226V231H433" fill="none" stroke="#d09a9a" stroke-width=".7"/>
</g>

<!-- pixel context -->
<rect x="1035.500" y="568.500" width="241.500" height="128.500" fill="#e2e2e2" stroke="#5a5a5a" stroke-width=".8"/>
<rect x="1036" y="569" width="241" height="9" fill="#c4c4c4"/>
<text x="1037.500" y="576.500">Pixel Context</text>
<path fill="#969696" d="M1036 578h42v19h-42zM1120.500 578h42.500v19h-42.500zM1206 578h43v19h-43zM1078 597h42.500v42H1078zM1163 597h43v42h-43zM1249 597h27.500v42H1249zM1036 639h42v43h-42zM1120.500 639h42.500v43h-42.500zM1206 639h43v43h-43z"/>
<g fill="#0d6a3a"><rect x="1036" y="579" width="16" height="15"/></g>
<g fill="#1c70a8"><rect x="1036" y="594" width="12" height="9"/></g>
<g fill="#a8641c"><rect x="1063" y="579" width="10" height="20"/><rect x="1076" y="579" width="9" height="24"/><rect x="1097" y="587" width="16" height="5"/><rect x="1108" y="579" width="5" height="21"/><rect x="1117" y="579" width="5" height="21"/><rect x="1117" y="587" width="11" height="8"/><rect x="1140" y="579" width="13" height="8"/><rect x="1156" y="579" width="12" height="8"/><rect x="1184" y="579" width="9" height="8"/><rect x="1196" y="579" width="5" height="8"/><rect x="1136" y="594" width="32" height="5"/><rect x="1056" y="592" width="17" height="4"/><rect x="1057" y="600" width="16" height="3"/></g>
<g class="c"><text class="w" x="1077" y="607">4 FPS</text><text class="w" x="1100" y="607">4.8 ms</text><text class="w" x="1170" y="615">4.8 ms</text><text class="w" x="1036" y="609">Frametime</text></g>
<path d="M1037 618H1047V612V618H1058V612V618H1076V612V618H1092V612V618H1104V612V618H1116V612V618H1130V612V618H1150V612V618H1155V612V618H1160V612V618H1163" fill="none" stroke="#d88a8a" stroke-width=".6"/>
<rect x="1076.500" y="682.500" width="38" height="14" fill="#d4d4d4" stroke="#bbb" stroke-width=".7"/><text x="1083" y="692.500" style="fill:#aaa">History</text>
<rect x="1197" y="682.500" width="38" height="14" fill="#d4d4d4" stroke="#bbb" stroke-width=".7"/><text x="1205" y="692.500" style="fill:#aaa">Debug</text>
</svg>
</body></html>
